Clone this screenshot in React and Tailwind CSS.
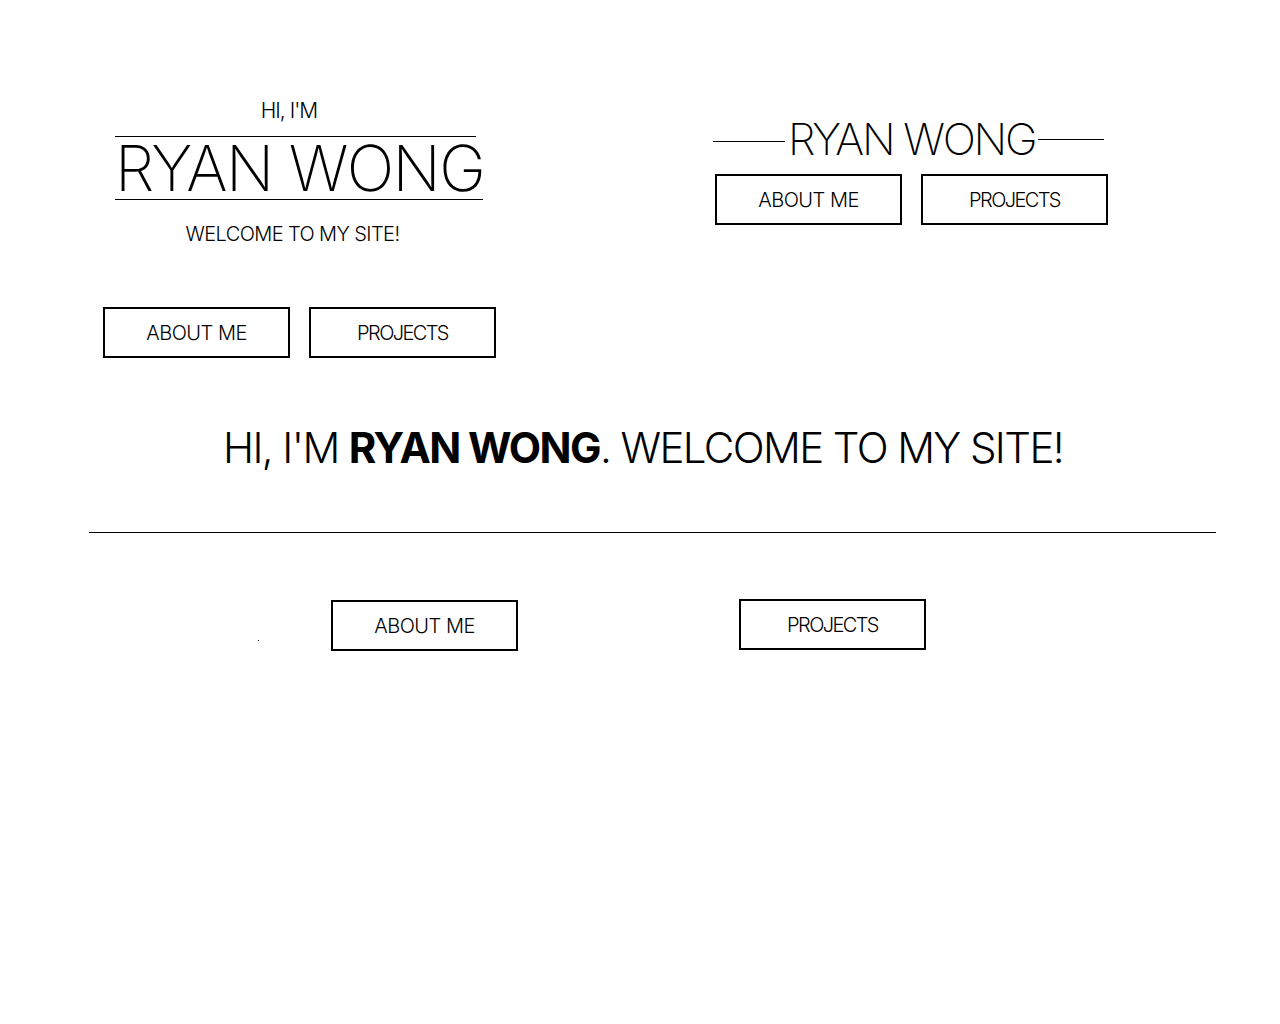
import React from "react";

const font = { fontFamily: "Inter, 'Noto Sans', sans-serif" };

function Btn({ children, className = "", textClass = "tracking-[-0.5px]" }) {
  return (
    <div
      className={
        "w-[187px] h-[51px] border-2 border-black flex items-center justify-center text-[20px] font-light text-black " +
        className
      }
    >
      <span className={textClass}>{children}</span>
    </div>
  );
}

function Pair({ gap = "gap-[19px]" }) {
  return (
    <div className={"flex " + gap}>
      <Btn>ABOUT ME</Btn>
      <Btn textClass="tracking-[-1.6px]">PROJECTS</Btn>
    </div>
  );
}

export default function App() {
  return (
    <div className="w-[1280px] min-h-[1024px] bg-white text-black" style={font}>
      {/* top row */}
      <div className="flex pt-[98px]">
        <div className="ml-[103px] w-[393px] flex flex-col">
          <div className="ml-[12px] w-[369px] flex flex-col">
            <div className="text-[21px] font-light leading-[26px] text-center pr-[21px] h-[26px] tracking-[-1px]">HI, I'M</div>
            <div className="mt-[12px] h-px bg-black w-[361px]" />
            <div className="text-[63px] font-extralight leading-[62px] tracking-[-1.6px] whitespace-nowrap">RYAN WONG</div>
            <div className="h-px bg-black w-[368px]" />
            <div className="mt-[21px] text-[20px] font-light leading-[26px] text-center pr-[14px] tracking-[-0.6px]">WELCOME TO MY SITE!</div>
          </div>
          <div className="mt-[60px]">
            <Pair />
          </div>
        </div>

        <div className="ml-[217px] pt-[18px] flex flex-col">
          <div className="flex items-center">
            <div className="w-[72px] h-px bg-black mt-[4px]" />
            <div className="ml-[3px] text-[44px] font-extralight leading-[46px] tracking-[-2.3px] whitespace-nowrap">RYAN WONG</div>
            <div className="ml-[3px] w-[66px] h-px bg-black" />
          </div>
          <div className="mt-[12px] ml-[2px]">
            <Pair />
          </div>
        </div>
      </div>

      {/* big line */}
      <div className="mt-[62px] pl-[6px] text-center text-[42px] font-light leading-[56px] tracking-[-1.6px] whitespace-nowrap">
        HI, I'M <span className="font-bold">RYAN WONG</span>. WELCOME TO MY SITE!
      </div>

      <div className="mt-[56px] ml-[89px] mr-[64px] h-px bg-black" />

      {/* bottom buttons */}
      <div className="mt-[66px] flex items-start">
        <div className="ml-[258px] mt-[41px] w-px h-px bg-black" />
        <Btn className="ml-[72px] mt-px">ABOUT ME</Btn>
        <Btn className="ml-[221px]" textClass="tracking-[-1.6px]">PROJECTS</Btn>
      </div>
    </div>
  );
}
